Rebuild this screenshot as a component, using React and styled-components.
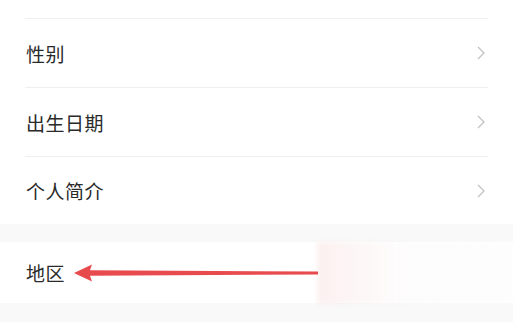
import React from "react";
import styled, { createGlobalStyle } from "styled-components";

const Global = createGlobalStyle`
  html, body { margin: 0; padding: 0; background: #fff; }
  body { font-family: "Noto Sans CJK SC", "Noto Sans", sans-serif; }
`;

const Page = styled.div`
  position: relative;
  width: 513px;
  height: 333px;
  overflow: hidden;
  background: #fff;
`;

const Group = styled.div`
  background: #fff;
  padding: 0 25px;
`;

const Row = styled.div`
  height: ${(p) => p.h}px;
  display: flex;
  align-items: center;
  justify-content: space-between;
  border-bottom: ${(p) => (p.last ? "none" : "1px solid #efefef")};
  box-sizing: border-box;
`;

const Label = styled.span`
  font-size: 19px;
  color: #2a2a2a;
  letter-spacing: 0.5px;
  padding-left: 1px;
`;

const Chevron = styled.svg`
  width: 10px;
  height: 16px;
  margin-right: 2px;
`;

const Band = styled.div`
  height: ${(p) => p.h}px;
  background: #f9f9f9;
`;

const Arrow = styled.svg`
  position: absolute;
  left: 72px;
  top: 263px;
  width: 250px;
  height: 20px;
`;

const Smudge = styled.div`
  position: absolute;
  left: 317px;
  top: 242px;
  width: 196px;
  height: 62px;
  background: linear-gradient(90deg, rgba(250, 228, 228, 0.55), rgba(250, 245, 245, 0.3) 40%, rgba(252, 252, 252, 0.6));
  filter: blur(2px);
`;

const Chev = () => (
  <Chevron viewBox="0 0 10 16">
    <path d="M2 2 L8 8 L2 14" fill="none" stroke="#c2c2c2" strokeWidth="1.3" />
  </Chevron>
);

export default function App() {
  return (
    <Page>
      <Global />
      <Group>
        <Row h={19} />
        <Row h={69}>
          <Label>性别</Label>
          <Chev />
        </Row>
        <Row h={69}>
          <Label>出生日期</Label>
          <Chev />
        </Row>
        <Row h={67} last>
          <Label>个人简介</Label>
          <Chev />
        </Row>
      </Group>
      <Band h={18} />
      <Group>
        <Row h={61} last>
          <Label>地区</Label>
        </Row>
      </Group>
      <Band h={19} />
      <Smudge />
      <Arrow viewBox="0 0 250 20">
        <path d="M2 10 L20 1.5 L18 7.3 L246 8.6 L246 11.4 L18 12.7 L20 18.5 Z" fill="#e84b4e" />
      </Arrow>
    </Page>
  );
}
